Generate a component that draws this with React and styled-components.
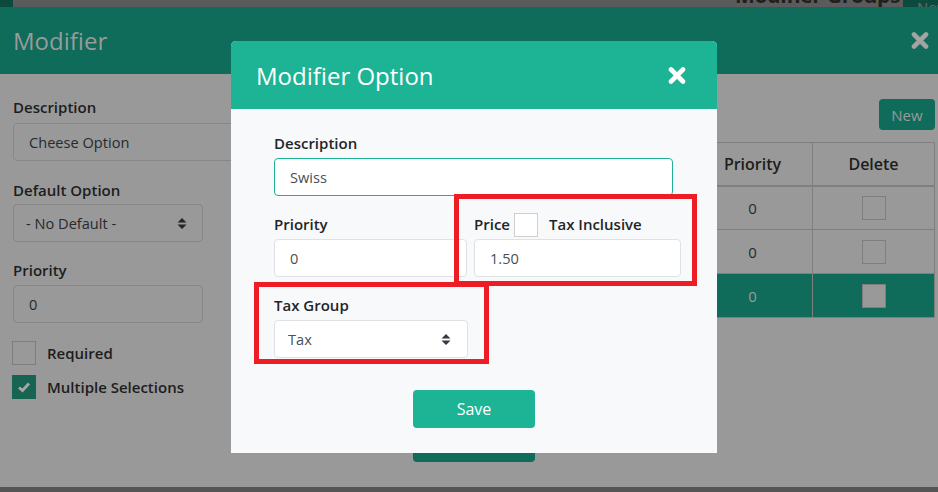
import React from "react";
import styled, { createGlobalStyle } from "styled-components";

const GlobalStyle = createGlobalStyle`
  html, body { margin: 0; padding: 0; background: #555; overflow: hidden; }
  * { box-sizing: border-box; }
  body { font-family: "Open Sans", "Noto Sans", sans-serif; }
`;

const Screen = styled.div`
  position: relative;
  width: 938px;
  height: 492px;
  overflow: hidden;
  background: #555555;
`;

/* ---------- page behind both modals ---------- */
const BackBar = styled.div`
  display: flex;
  height: 30px;
  background: #5b5b5b;
`;
const BackTab = styled.div`
  width: 13px;
  background: #0c4a3e;
`;
const BackTitle = styled.div`
  margin-left: 722px;
  margin-top: -16px;
  font-size: 21px;
  line-height: 22px;
  font-weight: 700;
  color: #1f1f1f;
  white-space: nowrap;
  letter-spacing: -0.3px;
`;
const BackNew = styled.div`
  margin-left: auto;
  width: 35px;
  background: #0c4a3e;
  color: #6a6a6a;
  font-size: 15px;
  padding: 0 0 0 14px;
  line-height: 14px;
  margin-top: -7px;
  padding-top: 7px;
`;

/* ---------- outer modal (dimmed) ---------- */
const OuterModal = styled.div`
  position: absolute;
  top: 7px;
  left: 0;
  width: 938px;
  height: 480px;
  display: flex;
  flex-direction: column;
`;
const OuterHeader = styled.div`
  height: 67px;
  flex: none;
  background: #0f6b5a;
  display: flex;
  align-items: center;
  justify-content: space-between;
  padding: 0 9px 0 13px;
`;
const OuterTitle = styled.h2`
  margin: 0;
  font-size: 24px;
  font-weight: 400;
  color: #9a9a9a;
`;
const OuterBody = styled.div`
  flex: 1;
  background: #999999;
  display: flex;
  flex-direction: column;
`;
const Columns = styled.div`
  display: flex;
  padding: 0 3px 0 13px;
`;
const LeftCol = styled.div`
  width: 450px;
  padding-top: 22px;
  display: flex;
  flex-direction: column;
`;
const RightCol = styled.div`
  flex: 1;
  padding-top: 25px;
  display: flex;
  flex-direction: column;
  align-items: flex-end;
`;
const Label = styled.label`
  display: block;
  font-size: 15px;
  font-weight: 600;
  line-height: 22px;
  margin-bottom: ${(p) => p.$gap ?? 4}px;
  color: ${(p) => (p.$dim ? "#1d1d1d" : "#212529")};
`;
const Field = styled.div`
  margin-bottom: ${(p) => p.$mb ?? 0}px;
`;
const DimInput = styled.div`
  width: ${(p) => p.$w || "100%"};
  height: 38px;
  border: 1px solid #878787;
  border-radius: 4px;
  display: flex;
  align-items: center;
  justify-content: space-between;
  padding: 0 15px 0 ${(p) => p.$pl ?? 15}px;
  font-size: 14.6px;
  color: #262a2d;
`;
const CheckRow = styled.div`
  display: flex;
  align-items: center;
  margin-bottom: ${(p) => p.$mb ?? 0}px;
  margin-left: -1px;
`;
const DimBox = styled.div`
  width: 24px;
  height: 24px;
  border: 1px solid ${(p) => (p.$checked ? "#176452" : "#7e7e7e")};
  background: ${(p) => (p.$checked ? "#176452" : p.$fill || "transparent")};
  display: flex;
  align-items: center;
  justify-content: center;
`;
const CheckText = styled.span`
  margin-left: 11px;
  font-size: 15px;
  font-weight: 600;
  color: #1d1d1d;
`;
const NewButton = styled.button`
  width: 56px;
  height: 31px;
  border: none;
  border-radius: 4px;
  background: #0f6b5a;
  color: #9a9a9a;
  font-family: inherit;
  font-size: 15px;
  padding: 0;
`;
const Table = styled.table`
  margin-top: 12px;
  width: 440px;
  border-collapse: collapse;
  font-size: 15px;
`;
const Th = styled.th`
  height: 43px;
  width: ${(p) => p.$w || "auto"};
  border: 1px solid #7f7f7f;
  border-bottom: 2px solid #7f7f7f;
  font-size: 16px;
  font-weight: 600;
  color: #1d1d1d;
  text-align: center;
  padding: 0;
`;
const Tr = styled.tr`
  background: ${(p) => (p.$active ? "#0f6b5a" : "transparent")};
`;
const Td = styled.td`
  height: 44px;
  border: 1px solid #7f7f7f;
  text-align: center;
  padding: 0;
  color: ${(p) => (p.$active ? "#9a9a9a" : "#262a2d")};
  & > div { margin: 0 auto; }
`;
const OuterFooter = styled.div`
  margin-top: auto;
  padding: 0 0 25px 413px;
`;

/* ---------- inner modal ---------- */
const InnerModal = styled.div`
  position: absolute;
  left: 231px;
  top: 41px;
  width: 486px;
  height: 412px;
  border-radius: 5px 5px 0 0;
  overflow: hidden;
  background: #f8f9fa;
  display: flex;
  flex-direction: column;
`;
const InnerHeader = styled.div`
  height: 68px;
  flex: none;
  background: #1cb495;
  display: flex;
  align-items: center;
  justify-content: space-between;
  padding: 0 31px 0 25px;
`;
const InnerTitle = styled.h2`
  margin: 0;
  font-size: 24px;
  font-weight: 400;
  color: #ffffff;
`;
const InnerBody = styled.div`
  padding: 23px 44px 0 43px;
  display: flex;
  flex-direction: column;
`;
const Input = styled.div`
  width: ${(p) => p.$w || "100%"};
  height: 38px;
  background: #ffffff;
  border: 1px solid ${(p) => (p.$focus ? "#1cb495" : "#dee2e6")};
  border-radius: 4px;
  display: flex;
  align-items: center;
  justify-content: space-between;
  padding: 0 16px 0 ${(p) => p.$pl ?? 15}px;
  font-size: 14.6px;
  color: #495057;
`;
const Row = styled.div`
  display: grid;
  grid-template-columns: 193px 207px;
  column-gap: 7px;
  margin-top: 17px;
`;
const PriceLabel = styled.div`
  display: flex;
  align-items: center;
  height: 22px;
  margin-bottom: 4px;
  font-size: 15px;
  font-weight: 600;
  color: #212529;
`;
const WhiteBox = styled.span`
  width: 24px;
  height: 24px;
  margin: 2px 0 0 4px;
  background: #ffffff;
  border: 1px solid #cfcfcf;
  flex: none;
`;
const TaxInclusive = styled.span`
  margin-left: 11px;
`;
const TaxField = styled.div`
  margin-top: 17px;
  width: 194px;
`;
const SaveRow = styled.div`
  display: flex;
  justify-content: center;
  margin-top: 32px;
  padding-left: 1px;
`;
const SaveButton = styled.button`
  width: 122px;
  height: 38px;
  border: none;
  border-radius: 4px;
  background: ${(p) => (p.$dim ? "#0f6b5a" : "#1cb495")};
  color: ${(p) => (p.$dim ? "#9a9a9a" : "#ffffff")};
  font-family: inherit;
  font-size: 16px;
  padding: 0;
`;

/* ---------- annotation boxes ---------- */
const Highlight = styled.div`
  position: absolute;
  left: ${(p) => p.$x}px;
  top: ${(p) => p.$y}px;
  width: ${(p) => p.$w}px;
  height: ${(p) => p.$h}px;
  border: 5px solid #ee1c25;
  pointer-events: none;
`;

/* ---------- icons ---------- */
const CloseIcon = ({ color }) => (
  <svg width="18" height="17" viewBox="0 0 18 17">
    <path d="M3 2.5 L15 14.5 M15 2.5 L3 14.5" stroke={color} strokeWidth="4.6" strokeLinecap="round" />
  </svg>
);
const SortIcon = ({ color }) => (
  <svg width="10" height="13" viewBox="0 0 10 13">
    <path d="M0.5 5.5 L5 1 L9.5 5.5 Z M0.5 7.5 L5 12 L9.5 7.5 Z" fill={color} />
  </svg>
);
const CheckIcon = () => (
  <svg width="14" height="12" viewBox="0 0 14 12">
    <path d="M2 6.5 L5.5 9.5 L12 2.5" stroke="#a8a8a8" strokeWidth="2.8" fill="none" />
  </svg>
);

export default function App() {
  return (
    <>
      <GlobalStyle />
      <Screen>
        <BackBar>
          <BackTab />
          <BackTitle>Modifier Groups</BackTitle>
          <BackNew>New</BackNew>
        </BackBar>

        <OuterModal>
          <OuterHeader>
            <OuterTitle>Modifier</OuterTitle>
            <CloseIcon color="#a3a3a3" />
          </OuterHeader>
          <OuterBody>
            <Columns>
              <LeftCol>
                <Field $mb={18}>
                  <Label $dim $gap={5}>Description</Label>
                  <DimInput>Cheese Option</DimInput>
                </Field>
                <Field $mb={17}>
                  <Label $dim $gap={3}>Default Option</Label>
                  <DimInput $w="190px" $pl={12}>
                    <span>- No Default -</span>
                    <SortIcon color="#262626" />
                  </DimInput>
                </Field>
                <Field $mb={18}>
                  <Label $dim $gap={4}>Priority</Label>
                  <DimInput $w="190px">0</DimInput>
                </Field>
                <CheckRow $mb={10}>
                  <DimBox />
                  <CheckText>Required</CheckText>
                </CheckRow>
                <CheckRow>
                  <DimBox $checked>
                    <CheckIcon />
                  </DimBox>
                  <CheckText>Multiple Selections</CheckText>
                </CheckRow>
              </LeftCol>
              <RightCol>
                <NewButton>New</NewButton>
                <Table>
                  <thead>
                    <tr>
                      <Th>Description</Th>
                      <Th $w="120px">Priority</Th>
                      <Th $w="122px">Delete</Th>
                    </tr>
                  </thead>
                  <tbody>
                    {[false, false, true].map((active, i) => (
                      <Tr key={i} $active={active}>
                        <Td $active={active}>Option</Td>
                        <Td $active={active}>0</Td>
                        <Td $active={active}>
                          <DimBox $fill={active ? "#999999" : "transparent"} />
                        </Td>
                      </Tr>
                    ))}
                  </tbody>
                </Table>
              </RightCol>
            </Columns>
            <OuterFooter>
              <SaveButton $dim>Save</SaveButton>
            </OuterFooter>
          </OuterBody>
        </OuterModal>

        <InnerModal>
          <InnerHeader>
            <InnerTitle>Modifier Option</InnerTitle>
            <CloseIcon color="#ffffff" />
          </InnerHeader>
          <InnerBody>
            <div>
              <Label>Description</Label>
              <Input $focus>Swiss</Input>
            </div>
            <Row>
              <div>
                <Label>Priority</Label>
                <Input>0</Input>
              </div>
              <div>
                <PriceLabel>
                  Price
                  <WhiteBox />
                  <TaxInclusive>Tax Inclusive</TaxInclusive>
                </PriceLabel>
                <Input>1.50</Input>
              </div>
            </Row>
            <TaxField>
              <Label>Tax Group</Label>
              <Input $pl={13}>
                <span>Tax</span>
                <SortIcon color="#343a40" />
              </Input>
            </TaxField>
            <SaveRow>
              <SaveButton>Save</SaveButton>
            </SaveRow>
          </InnerBody>
        </InnerModal>

        <Highlight $x={454} $y={194} $w={243} $h={92} />
        <Highlight $x={254} $y={282} $w={235} $h={82} />
      </Screen>
    </>
  );
}
